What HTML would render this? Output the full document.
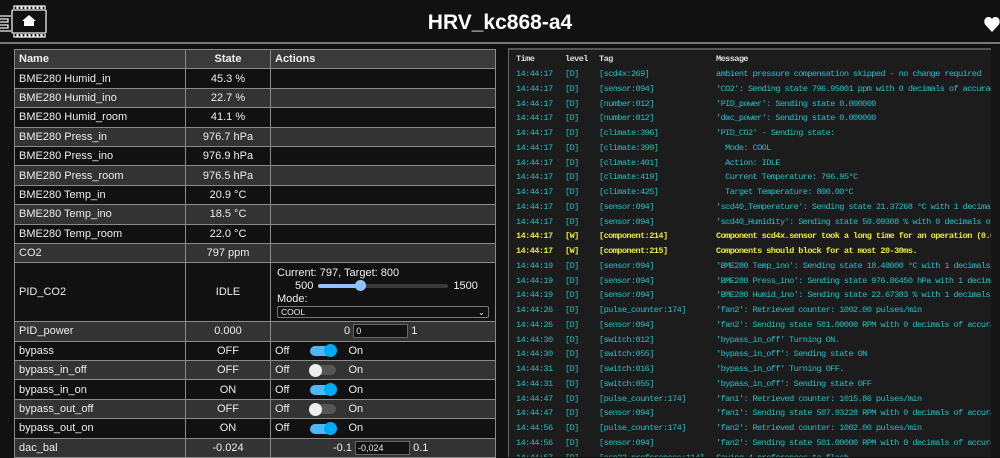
<!DOCTYPE html>
<html><head><meta charset="utf-8"><style>
*{box-sizing:border-box}
body{margin:0;width:1000px;height:457px;overflow:hidden;background:#111;color:#eee;font-family:"Liberation Sans",sans-serif;position:relative}
.hdr{position:absolute;left:0;top:0;width:1000px;height:44px;background:#111;border-bottom:2px solid #777}
h1{position:absolute;left:0;width:1000px;top:11px;margin:0;text-align:center;font-size:21px;font-weight:bold;color:#fff}
table{position:absolute;left:14px;top:49px;width:482px;border-collapse:collapse;font-size:11px}
td,th{border:1px solid #8a8a8a;height:19.4px;padding:0 4px;white-space:nowrap}
th{text-align:left;background:#3a3a3a;font-weight:bold}
th.c{text-align:center}
tr:nth-child(even) td{background:#111}
tr:nth-child(odd) td{background:#333}
td.s{text-align:center}
.tg{display:inline-block;position:relative;width:26px;height:10px;border-radius:5px;vertical-align:middle;margin:0 12px 0 21px}
.on{background:#4fb8f2}.on i{right:-1px;background:#03a9f4}
.off{background:#555}.off i{left:-1px;background:#eee}
.tg i{position:absolute;top:-1.5px;width:13px;height:13px;border-radius:50%}
.inp{display:inline-block;width:55px;height:14px;border:1px solid #666;background:#111;vertical-align:middle;font-size:9px;line-height:12px;padding-left:2px}
.log{position:absolute;left:508px;top:48px;width:483px;height:409px;background:#1c1c1c;border-left:1px solid #666;border-top:2px solid #555;overflow:hidden;font-family:"Liberation Mono",monospace;font-size:8.6px;letter-spacing:-0.59px}
.sb{position:absolute;left:991px;top:46px;width:9px;height:411px;background:#161616}
.r{position:absolute;left:7px;height:12px;white-space:nowrap;color:#22c0c6}
.r span{position:absolute;top:0}
.w{color:#e8e83c;font-weight:bold}
.h{color:#ddd;font-weight:bold}
</style></head><body>
<div class="hdr">
<svg style="position:absolute;left:0;top:3px" width="50" height="36" viewBox="0 0 50 36">
<g fill="none" stroke="#eee" stroke-width="1.3">
<rect x="12" y="7" width="34" height="23" rx="1"/>
<path d="M14 6v-3h3v3M18 6v-3h3v3M22 6v-3h3v3M26 6v-3h3v3M30 6v-3h3v3M34 6v-3h3v3M38 6v-3h3v3M42 6v-3h3v3"/>
<path d="M14 31v3h3v-3M18 31v3h3v-3M22 31v3h3v-3M26 31v3h3v-3M30 31v3h3v-3M34 31v3h3v-3M38 31v3h3v-3M42 31v3h3v-3"/>
<path d="M0 13h11M0 16h8v3h-8M0 22h8v3h-8M0 28h11"/>
</g>
<path fill="#fff" d="M29 12l7 6h-2v5h-10v-5h-2z"/>
</svg>
<h1>HRV_kc868-a4</h1>
<svg style="position:absolute;left:984px;top:16px" width="16" height="17" viewBox="0 0 16 17"><path fill="#fff" d="M8 16L1.5 9C-1 6 0.5 1 4.5 1 6.3 1 7.4 2 8 3 8.6 2 9.7 1 11.5 1 15.5 1 17 6 14.5 9z"/></svg>
</div>
<table>
<tr><th style="width:171px">Name</th><th class="c" style="width:85px">State</th><th>Actions</th></tr>
<tr><td>BME280 Humid_in</td><td class="s">45.3 %</td><td></td></tr>
<tr><td>BME280 Humid_ino</td><td class="s">22.7 %</td><td></td></tr>
<tr><td>BME280 Humid_room</td><td class="s">41.1 %</td><td></td></tr>
<tr><td>BME280 Press_in</td><td class="s">976.7 hPa</td><td></td></tr>
<tr><td>BME280 Press_ino</td><td class="s">976.9 hPa</td><td></td></tr>
<tr><td>BME280 Press_room</td><td class="s">976.5 hPa</td><td></td></tr>
<tr><td>BME280 Temp_in</td><td class="s">20.9 °C</td><td></td></tr>
<tr><td>BME280 Temp_ino</td><td class="s">18.5 °C</td><td></td></tr>
<tr><td>BME280 Temp_room</td><td class="s">22.0 °C</td><td></td></tr>
<tr><td>CO2</td><td class="s">797 ppm</td><td></td></tr>
<tr><td style="height:59px">PID_CO2</td><td class="s">IDLE</td><td style="padding:2px 6px;line-height:13px">Current: 797, Target: 800<br>
<span style="margin-left:18px">500</span><span style="display:inline-block;position:relative;width:130px;height:4px;background:#3b3b3b;border-radius:2px;vertical-align:middle;margin:0 5px"><span style="position:absolute;left:0;top:0;width:42px;height:4px;background:#8cc4ff;border-radius:2px"></span><span style="position:absolute;left:37px;top:-3.5px;width:11px;height:11px;background:#8cc4ff;border-radius:50%"></span></span>1500<br>
Mode:<br><span style="display:block;height:12px;border:1px solid #777;border-radius:2px;font-size:8.5px;line-height:10px;padding-left:3px;position:relative">COOL<span style="position:absolute;right:3px;top:0">&#8964;</span></span></td></tr>
<tr><td>PID_power</td><td class="s">0.000</td><td style="padding-left:73px">0 <span class="inp">0</span> 1</td></tr>
<tr><td>bypass</td><td class="s">OFF</td><td>Off<span class="tg on"><i></i></span>On</td></tr>
<tr><td>bypass_in_off</td><td class="s">OFF</td><td>Off<span class="tg off"><i></i></span>On</td></tr>
<tr><td>bypass_in_on</td><td class="s">ON</td><td>Off<span class="tg on"><i></i></span>On</td></tr>
<tr><td>bypass_out_off</td><td class="s">OFF</td><td>Off<span class="tg off"><i></i></span>On</td></tr>
<tr><td>bypass_out_on</td><td class="s">ON</td><td>Off<span class="tg on"><i></i></span>On</td></tr>
<tr><td>dac_bal</td><td class="s">-0.024</td><td style="padding-left:62px">-0.1 <span class="inp">-0,024</span> 0.1</td></tr>
</table>
<div class="sb"></div>
<div class="log">
<div class="r h" style="top:4px"><span style="left:0">Time</span><span style="left:49px">level</span><span style="left:83px">Tag</span><span style="left:200px">Message</span></div>
<div id="L"></div>
</div>
<script>
var d=[
["14:44:17","D","[scd4x:269]","ambient pressure compensation skipped - no change required"],
["14:44:17","D","[sensor:094]","'CO2': Sending state 796.95001 ppm with 0 decimals of accuracy"],
["14:44:17","D","[number:012]","'PID_power': Sending state 0.000000"],
["14:44:17","D","[number:012]","'dac_power': Sending state 0.000000"],
["14:44:17","D","[climate:396]","'PID_CO2' - Sending state:"],
["14:44:17","D","[climate:399]","  Mode: COOL"],
["14:44:17","D","[climate:401]","  Action: IDLE"],
["14:44:17","D","[climate:419]","  Current Temperature: 796.95°C"],
["14:44:17","D","[climate:425]","  Target Temperature: 800.00°C"],
["14:44:17","D","[sensor:094]","'scd40_Temperature': Sending state 21.37268 °C with 1 decimals of accuracy"],
["14:44:17","D","[sensor:094]","'scd40_Humidity': Sending state 50.09308 % with 0 decimals of accuracy"],
["14:44:17","W","[component:214]","Component scd4x.sensor took a long time for an operation (0.05 s)."],
["14:44:17","W","[component:215]","Components should block for at most 20-30ms."],
["14:44:19","D","[sensor:094]","'BME280 Temp_ino': Sending state 18.48000 °C with 1 decimals of accuracy"],
["14:44:19","D","[sensor:094]","'BME280 Press_ino': Sending state 976.86450 hPa with 1 decimals of accuracy"],
["14:44:19","D","[sensor:094]","'BME280 Humid_ino': Sending state 22.67383 % with 1 decimals of accuracy"],
["14:44:26","D","[pulse_counter:174]","'fan2': Retrieved counter: 1002.00 pulses/min"],
["14:44:26","D","[sensor:094]","'fan2': Sending state 501.00000 RPM with 0 decimals of accuracy"],
["14:44:30","D","[switch:012]","'bypass_in_off' Turning ON."],
["14:44:30","D","[switch:055]","'bypass_in_off': Sending state ON"],
["14:44:31","D","[switch:016]","'bypass_in_off' Turning OFF."],
["14:44:31","D","[switch:055]","'bypass_in_off': Sending state OFF"],
["14:44:47","D","[pulse_counter:174]","'fan1': Retrieved counter: 1015.86 pulses/min"],
["14:44:47","D","[sensor:094]","'fan1': Sending state 507.93228 RPM with 0 decimals of accuracy"],
["14:44:56","D","[pulse_counter:174]","'fan2': Retrieved counter: 1002.00 pulses/min"],
["14:44:56","D","[sensor:094]","'fan2': Sending state 501.00000 RPM with 0 decimals of accuracy"],
["14:44:57","D","[esp32.preferences:114]","Saving 4 preferences to flash..."]];
var h="";d.forEach(function(r,i){h+='<div class="r'+(r[1]=="W"?" w":"")+'" style="top:'+(19+i*14.75)+'px"><span style="left:0">'+r[0]+'</span><span style="left:49px">['+r[1]+']</span><span style="left:83px">'+r[2]+'</span><span style="left:200px;white-space:pre">'+r[3]+'</span></div>';});
document.getElementById("L").innerHTML=h;
</script>
</body></html>
